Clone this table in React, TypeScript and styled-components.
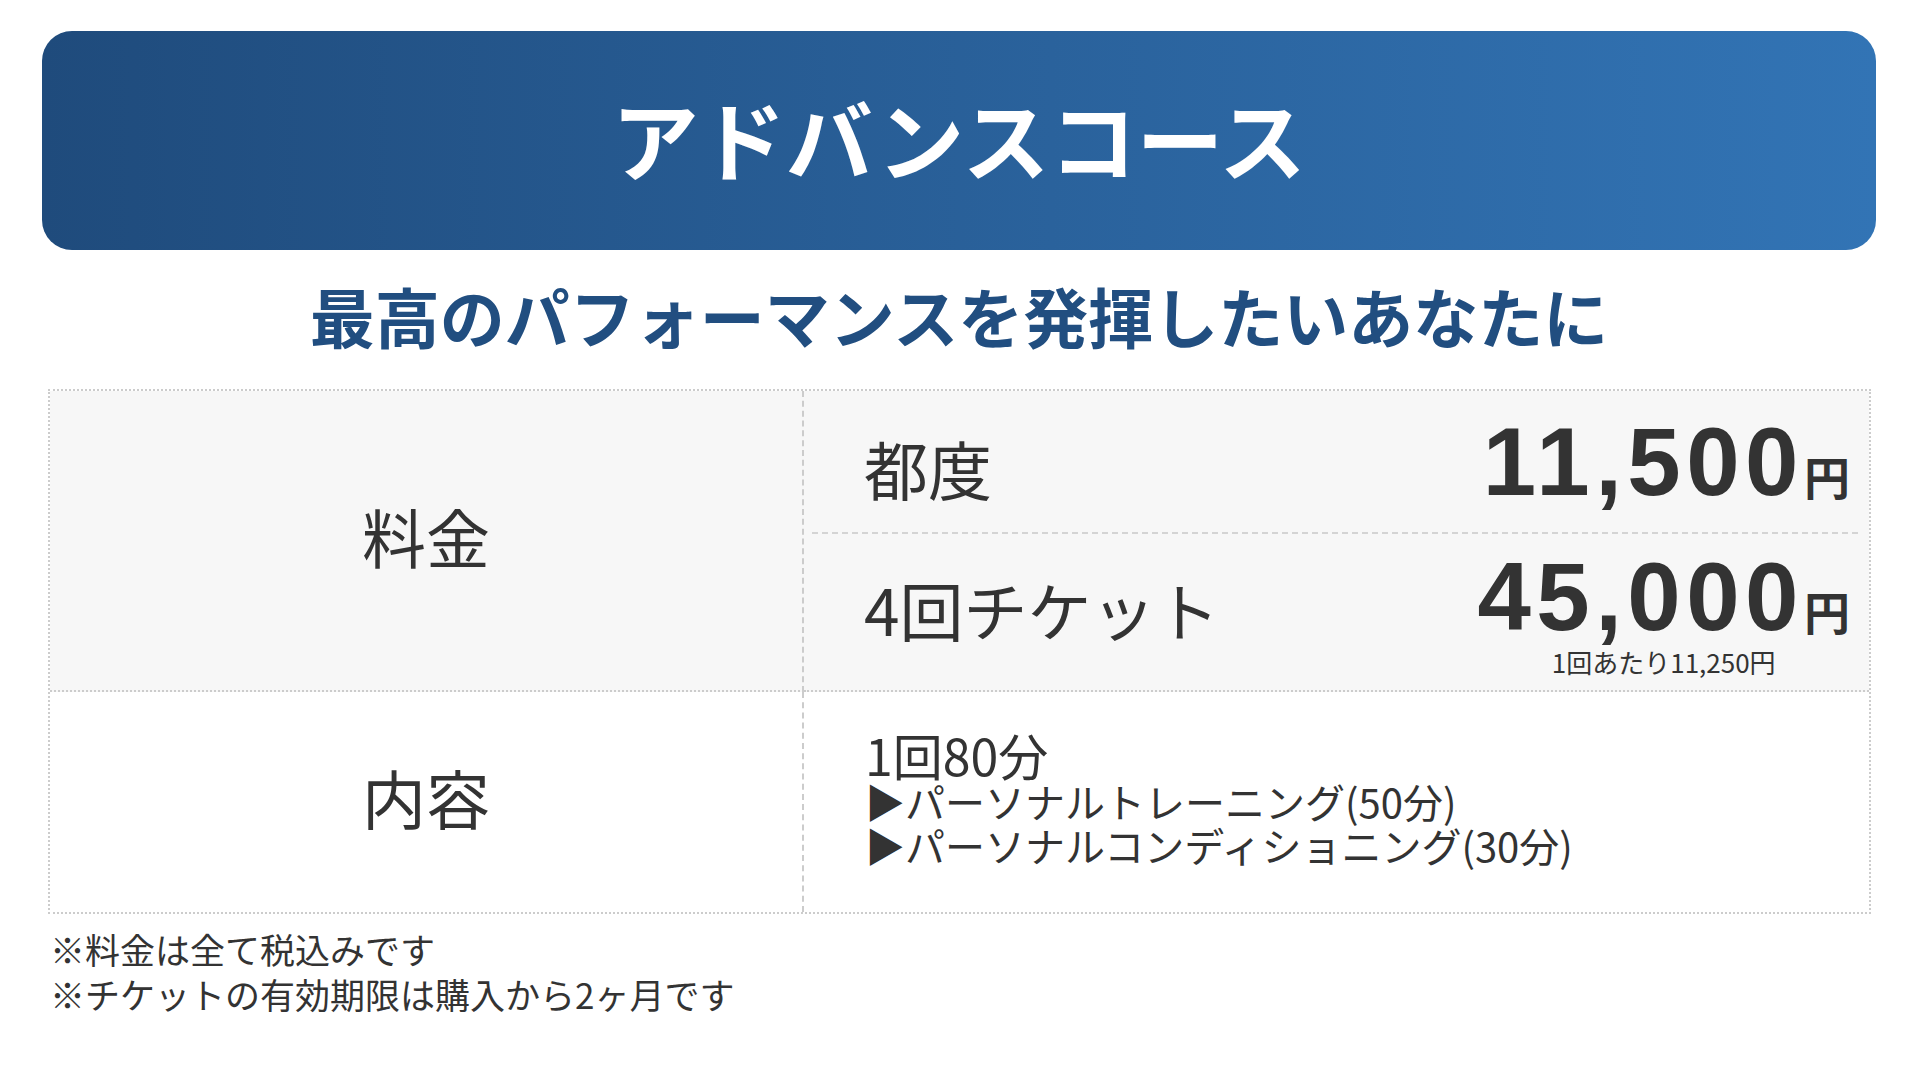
import React from "react";
import styled, { createGlobalStyle } from "styled-components";

const GlobalStyle = createGlobalStyle`
  html, body {
    margin: 0;
    padding: 0;
    background: #ffffff;
  }
  body {
    font-family: "Noto Sans CJK JP", "Noto Sans", sans-serif;
    color: #333333;
  }
`;

const Page = styled.div`
  width: 1920px;
  height: 1080px;
  box-sizing: border-box;
  padding: 31px 44px 0 42px;
  display: flex;
  flex-direction: column;
`;

const Header = styled.header`
  height: 219px;
  box-sizing: border-box;
  padding-bottom: 6px;
  border-radius: 30px;
  background: linear-gradient(90deg, #1f4b7c 0%, #2a629c 55%, #3274b5 100%);
  display: flex;
  align-items: center;
  justify-content: center;
`;

const Title = styled.h1`
  margin: 0;
  font-family: "Noto Sans CJK JP", sans-serif;
  font-weight: 700;
  font-size: 87px;
  line-height: 1;
  color: #ffffff;
`;

const Subtitle = styled.h2`
  margin: 33px 0 42px;
  text-align: center;
  font-family: "Noto Sans CJK JP", sans-serif;
  font-weight: 700;
  font-size: 65px;
  line-height: 64px;
  color: #214e80;
`;

const Table = styled.div`
  margin: 0 5px 0 6px;
  display: grid;
  grid-template-columns: 754px 1fr;
  grid-template-rows: 301px 220px;
  border: 2px dotted #cccccc;
`;

const HeadCell = styled.div<{ $shaded?: boolean; $last?: boolean }>`
  background: ${(p) => (p.$shaded ? "#f7f7f7" : "#ffffff")};
  border-right: 2px dashed #cccccc;
  border-bottom: ${(p) => (p.$last ? "none" : "2px dotted #cccccc")};
  box-sizing: border-box;
  padding-bottom: 12px;
  display: flex;
  align-items: center;
  justify-content: center;
  font-size: 64px;
  line-height: 1;
  font-weight: 400;
  color: #333333;
`;

const PriceCell = styled.div`
  background: #f7f7f7;
  border-bottom: 2px dotted #cccccc;
  padding: 0 11px 0 8px;
  display: flex;
  flex-direction: column;
`;

const PriceRow = styled.div<{ $divided?: boolean; $grow: number }>`
  flex: ${(p) => p.$grow} 1 0;
  display: flex;
  align-items: center;
  justify-content: space-between;
  padding: 0 8px 0 52px;
  border-bottom: ${(p) => (p.$divided ? "2px dashed #d4d4d4" : "none")};
`;

const RowLabel = styled.div<{ $shift?: number }>`
  font-size: 64px;
  line-height: 1;
  font-weight: 400;
  color: #333333;
  margin-top: ${(p) => p.$shift ?? 0}px;
`;

const PriceBlock = styled.div`
  display: flex;
  flex-direction: column;
  align-items: center;
`;

const Amount = styled.div`
  display: flex;
  align-items: baseline;
  color: #333333;
`;

const Digits = styled.span`
  font-family: "Liberation Sans", Arial, sans-serif;
  font-weight: 700;
  font-size: 96px;
  line-height: 1;
  letter-spacing: 5.5px;
`;

const Yen = styled.span`
  font-family: "Noto Sans CJK JP", sans-serif;
  font-weight: 700;
  font-size: 46px;
  line-height: 1;
  margin-left: 0;
`;

const PerVisit = styled.div`
  margin-top: 4px;
  font-size: 26px;
  line-height: 1;
  color: #333333;
`;

const ContentCell = styled.div`
  display: flex;
  flex-direction: column;
  justify-content: center;
  padding: 0 0 8px 61px;
  color: #333333;
`;

const Duration = styled.div`
  font-size: 50px;
  line-height: 50px;
`;

const MenuLine = styled.div`
  font-size: 40px;
  line-height: 44px;
`;

const Notes = styled.div`
  margin: 12px 0 0 8px;
  font-size: 35px;
  line-height: 45px;
  color: #333333;
`;

export default function App() {
  return (
    <>
      <GlobalStyle />
      <Page>
        <Header>
          <Title>アドバンスコース</Title>
        </Header>
        <Subtitle>最高のパフォーマンスを発揮したいあなたに</Subtitle>
        <Table>
          <HeadCell $shaded>料金</HeadCell>
          <PriceCell>
            <PriceRow $divided $grow={142}>
              <RowLabel $shift={10}>都度</RowLabel>
              <PriceBlock>
                <Amount>
                  <Digits>11,500</Digits>
                  <Yen>円</Yen>
                </Amount>
              </PriceBlock>
            </PriceRow>
            <PriceRow $grow={157}>
              <RowLabel $shift={-8}>4回チケット</RowLabel>
              <PriceBlock>
                <Amount>
                  <Digits>45,000</Digits>
                  <Yen>円</Yen>
                </Amount>
                <PerVisit>1回あたり11,250円</PerVisit>
              </PriceBlock>
            </PriceRow>
          </PriceCell>
          <HeadCell $last>内容</HeadCell>
          <ContentCell>
            <Duration>1回80分</Duration>
            <MenuLine>▶パーソナルトレーニング(50分)</MenuLine>
            <MenuLine>▶パーソナルコンディショニング(30分)</MenuLine>
          </ContentCell>
        </Table>
        <Notes>
          <div>※料金は全て税込みです</div>
          <div>※チケットの有効期限は購入から2ヶ月です</div>
        </Notes>
      </Page>
    </>
  );
}
